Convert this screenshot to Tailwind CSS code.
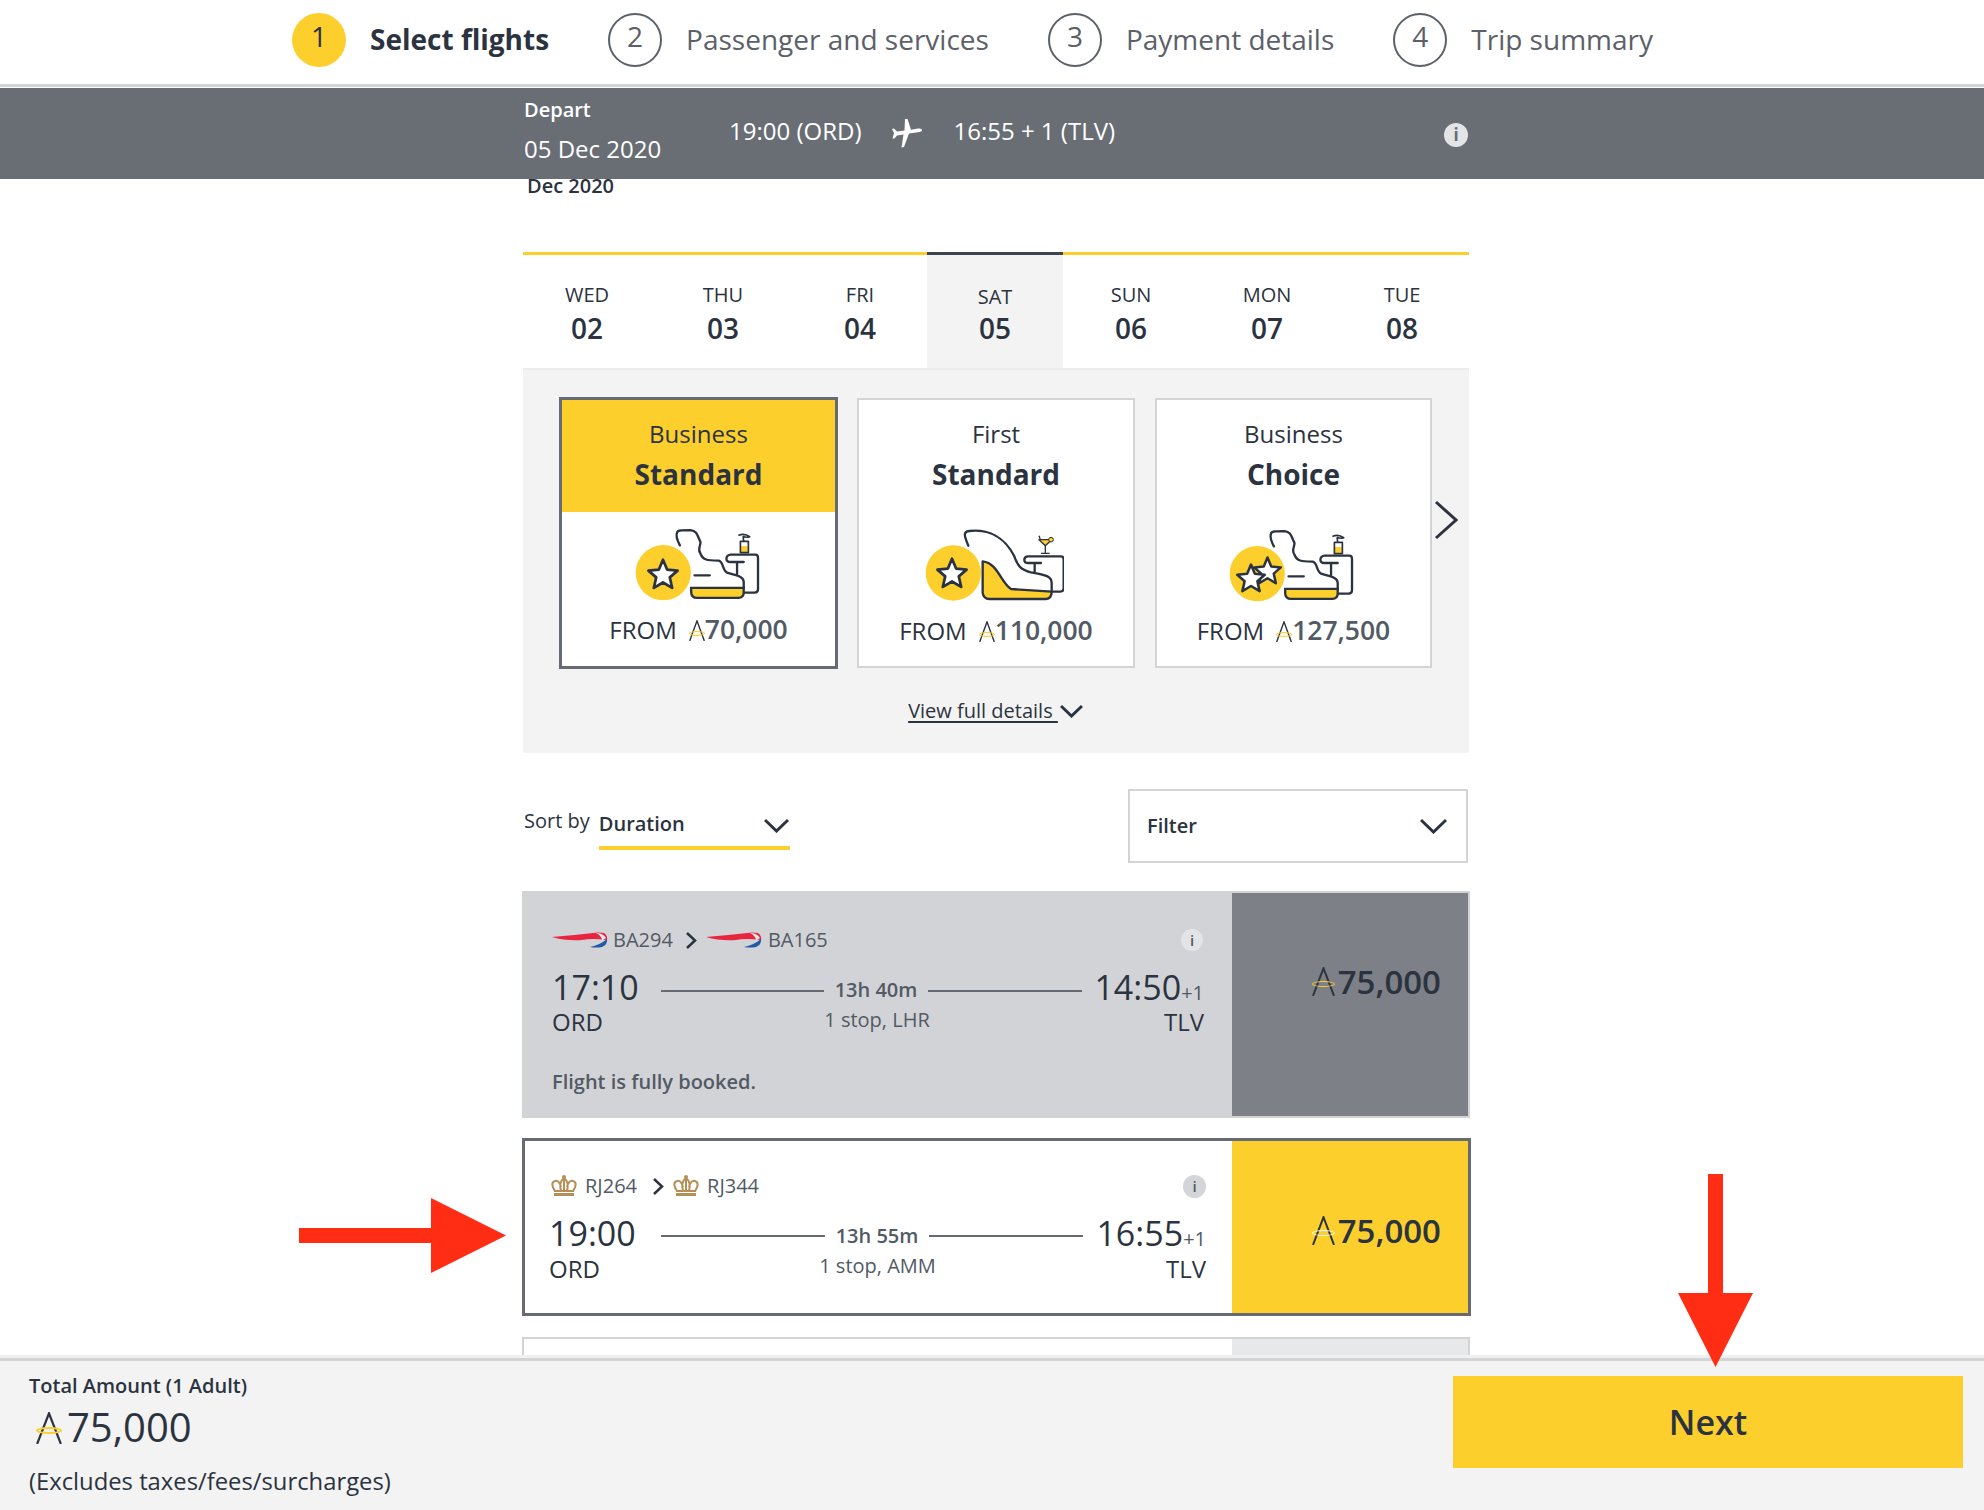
<!DOCTYPE html>
<html lang="en">
<head>
    <meta charset="UTF-8">
    <title>Select flights</title>
    <script src="https://cdn.jsdelivr.net/npm/@tailwindcss/browser@4"></script>
</head>
<body class="bg-white">
    <svg class="hidden">
        <symbol id="seat" viewBox="340 445 385 225">
            <circle cx="428" cy="582" r="83" fill="#fccf2d" />
            <path d="M512 628H670V642Q670 658 654 658H530Q512 658 512 640Z" fill="#fccf2d" stroke="#2b3340" stroke-width="7" />
            <path d="M478 500C470 485 465 470 470 460C472 454 480 454 510 454C530 456 530 470 540 490C540 505 530 510 540 525C548 545 560 545 595 546C610 550 605 575 620 582C640 590 670 590 670 610V628M522 590H568M650 528H705Q713 528 713 538V632Q713 642 703 642H672M650 528H630Q618 530 618 540Q618 550 630 550H670M650 550V590" fill="none" stroke="#2b3340" stroke-width="7" stroke-linejoin="round" stroke-linecap="round" />
            <path d="M662 502H682V520H662Z" fill="#fccf2d" />
            <path d="M660 488H684V522H660ZM670 488L668 472M654 470Q672 462 688 474Q676 478 668 472" fill="none" stroke="#2b3340" stroke-width="5" stroke-linejoin="round" />
        </symbol>
        <symbol id="star" viewBox="0 0 100 100">
            <path d="M50 8L62 37L93 40L70 60L77 91L50 75L23 91L30 60L7 40L38 37Z" fill="#fff" stroke="#2b3340" stroke-width="8" stroke-linejoin="round" />
        </symbol>
        <symbol id="avios" viewBox="0 0 24 24" preserveAspectRatio="none">
            <path d="M1 24L12 1L23 24" fill="none" stroke="currentColor" stroke-width="2" />
        </symbol>
        <symbol id="ba" viewBox="0 0 56 16">
            <path d="M0 5Q24 3 46 .5L52 1Q56 4 55 8Q40 6 30 8Q14 9 0 5Z" fill="#e8243f" />
            <path d="M38 15Q48 13 55 7Q56 12 50 15Q44 16 38 15Z" fill="#1f5aa6" />
            <path d="M44 1Q51 1 54 6L50 8.500Q50 4 44 1Z" fill="#e9e9ec" />
        </symbol>
        <symbol id="crown" viewBox="0 0 26 22">
            <path d="M4 16C1 12 0 7 4 6C7 5 9 8 10 12M22 16C25 12 26 7 22 6C19 5 17 8 16 12M13 3C9 6 9 12 10 16M13 3C17 6 17 12 16 16M13 3V16M3 16H23" fill="none" stroke="#b58f55" stroke-width="2" />
            <path d="M3 18H23V21H3Z" fill="#b58f55" />
            <circle cx="13" cy="2" r="2" fill="#b58f55" />
        </symbol>
    </svg>

    <div class="relative w-[1984px] h-[1510px] overflow-hidden font-['Open_Sans',sans-serif] text-[#2b3340]">
        <!-- Steps -->
        <div class="flex items-center h-[80px] mb-[4px] pl-[292px] text-[28px] text-[#5c6169]">
            <span class="flex items-center justify-center w-[54px] h-[54px] pb-[9px] rounded-full bg-[#fccf2d] text-[#2b3340]">1</span>
            <span class="ml-[24px] pb-[2px] font-bold text-[#2b3340]">Select flights</span>
            <span class="flex items-center justify-center w-[54px] h-[54px] ml-[59px] pb-[9px] rounded-full border-2 border-[#5c6169]">2</span>
            <span class="ml-[24px] pb-[2px]">Passenger and services</span>
            <span class="flex items-center justify-center w-[54px] h-[54px] ml-[59px] pb-[9px] rounded-full border-2 border-[#5c6169]">3</span>
            <span class="ml-[24px] pb-[2px]">Payment details</span>
            <span class="flex items-center justify-center w-[54px] h-[54px] ml-[59px] pb-[9px] rounded-full border-2 border-[#5c6169]">4</span>
            <span class="ml-[24px] pb-[2px]">Trip summary</span>
        </div>
        <div class="h-[3px] bg-[#d3d4d5]"></div>
        <div class="h-[1px] bg-white"></div>

        <!-- Selected flight bar -->
        <div class="relative z-10 flex h-[91px] pl-[524px] bg-[#696d74] text-white">
            <div class="w-[205px]">
                <div class="mt-[10px] h-[24px] leading-[24px] text-[20px] font-semibold">Depart</div>
                <div class="mt-[11px] h-[32px] leading-[32px] text-[24px]">05 Dec 2020</div>
            </div>
            <div class="mt-[26px] h-[34px] leading-[34px] text-[24px]">19:00 (ORD)</div>
            <svg class="ml-[30px] mt-[29px] w-[32px] h-[32px]" viewBox="0 0 32 32" fill="#fff">
                <path d="M31 13Q31 15 27 15.200L18 16.500L13 30L10.500 30.500L12.500 17.500L6 18.500L3.500 21.500L1.500 21.500L3 16L1 12L3 11.500L6 14.500L13.500 13.500L14 2L16.500 2L20 12.800L27 11.500Q31 11 31 13Z" />
            </svg>
            <div class="ml-[30px] mt-[26px] h-[34px] leading-[34px] text-[24px]">16:55 + 1 (TLV)</div>
            <div class="flex items-center justify-center w-[24px] h-[24px] ml-[329px] mt-[35px] rounded-full bg-[#e3e4e6] text-[#696d74] text-[17px] font-bold">i</div>
        </div>

        <main class="w-[946px] ml-[523px]">
            <div class="h-[73px] -mt-[6px] mb-[6px] pl-[4px] text-[20px] font-semibold leading-[26px]">Dec 2020</div>

            <!-- Days -->
            <div class="grid grid-cols-[128px_144px_132px_136px_136px_136px_134px] h-[118px] border-b-2 border-[#ececec]">
                <div class="border-t-[3px] border-[#fccf2d] text-center pt-[26px]"><div class="text-[20px] leading-[28px]">WED</div><div class="text-[28px] font-semibold leading-[38px]">02</div></div>
                <div class="border-t-[3px] border-[#fccf2d] text-center pt-[26px]"><div class="text-[20px] leading-[28px]">THU</div><div class="text-[28px] font-semibold leading-[38px]">03</div></div>
                <div class="border-t-[3px] border-[#fccf2d] text-center pt-[26px] pr-[2px]"><div class="text-[20px] leading-[28px]">FRI</div><div class="text-[28px] font-semibold leading-[38px]">04</div></div>
                <div class="border-t-[3px] border-[#3f4550] bg-[#f3f3f3] text-center pt-[28px]"><div class="text-[20px] leading-[28px]">SAT</div><div class="text-[28px] font-semibold leading-[35px]">05</div></div>
                <div class="border-t-[3px] border-[#fccf2d] text-center pt-[26px]"><div class="text-[20px] leading-[28px]">SUN</div><div class="text-[28px] font-semibold leading-[38px]">06</div></div>
                <div class="border-t-[3px] border-[#fccf2d] text-center pt-[26px]"><div class="text-[20px] leading-[28px]">MON</div><div class="text-[28px] font-semibold leading-[38px]">07</div></div>
                <div class="border-t-[3px] border-[#fccf2d] text-center pt-[26px]"><div class="text-[20px] leading-[28px]">TUE</div><div class="text-[28px] font-semibold leading-[38px]">08</div></div>
            </div>

            <!-- Fare cards -->
            <div class="h-[383px] pt-[27px] pl-[36px] bg-[#f3f3f3]">
                <div class="flex items-center gap-[19px]">
                    <div class="w-[279px] h-[272px] border-[3px] border-[#666b73] bg-white text-center">
                        <div class="h-[112px] pt-[17px] bg-[#fccf2d]">
                            <div class="text-[24px] leading-[33px]">Business</div>
                            <div class="text-[28px] font-bold leading-[38px] mt-[5px]">Standard</div>
                        </div>
                        <svg class="w-[128px] h-[75px] mt-[15px] ml-[72px]"><use href="#seat" /></svg>
                        <svg class="absolute left-[646px] top-[557px] w-[34px] h-[34px]"><use href="#star" /></svg>
                        <div class="flex items-center justify-center h-[36px] mt-[10px]">
                            <span class="text-[24px]">FROM</span>
                            <span class="relative ml-[12px] w-[16px] h-[21px]"><svg class="w-[16px] h-[21px]"><use href="#avios" /></svg><i class="absolute left-0 top-[11px] w-[16px] h-[5px] rounded-[50%] border border-[#fccf2d]"></i></span>
                            <span class="text-[26.500px] font-semibold text-[#525a65]">70,000</span>
                        </div>
                    </div>
                    <div class="w-[278px] h-[270px] border-2 border-[#d4d4d4] bg-white text-center">
                        <div class="h-[112px] pt-[17px]">
                            <div class="text-[24px] leading-[33px]">First</div>
                            <div class="text-[28px] font-bold leading-[38px] mt-[5px]">Standard</div>
                        </div>
                        <svg class="w-[140px] h-[75px] mt-[16px] ml-[65px]" viewBox="1209 445 420 225">
                            <path d="M1385 612V640Q1388 658 1405 658H1575Q1592 656 1592 636L1470 628C1440 610 1430 550 1385 545Z" fill="#fccf2d" stroke="#2b3340" stroke-width="7" stroke-linejoin="round" />
                            <circle cx="1297" cy="580" r="83" fill="#fccf2d" />
                            <path d="M1342 498C1330 470 1325 456 1345 454C1400 448 1450 470 1480 530C1490 560 1500 570 1530 578C1575 586 1592 590 1592 610V636M1590 530H1620Q1628 530 1628 540V626Q1628 636 1618 636H1592M1590 530H1520Q1510 532 1510 540Q1510 550 1522 550H1560M1541 550V576" fill="none" stroke="#2b3340" stroke-width="7" stroke-linejoin="round" stroke-linecap="round" />
                            <path d="M1554 480H1592L1573 498Z" fill="#fccf2d" stroke="#2b3340" stroke-width="4" stroke-linejoin="round" />
                            <path d="M1573 498V520M1560 521H1586M1554 468L1558 480" stroke="#2b3340" stroke-width="4" fill="none" />
                            <circle cx="1590" cy="480" r="7" fill="#fccf2d" stroke="#2b3340" stroke-width="3" />
                        </svg>
                        <svg class="absolute left-[935px] top-[556px] w-[34px] h-[34px]"><use href="#star" /></svg>
                        <div class="flex items-center justify-center h-[36px] mt-[10px]">
                            <span class="text-[24px]">FROM</span>
                            <span class="relative ml-[12px] w-[16px] h-[21px]"><svg class="w-[16px] h-[21px]"><use href="#avios" /></svg><i class="absolute left-0 top-[11px] w-[16px] h-[5px] rounded-[50%] border border-[#fccf2d]"></i></span>
                            <span class="text-[26.500px] font-semibold text-[#525a65]">110,000</span>
                        </div>
                    </div>
                    <div class="w-[277px] h-[270px] ml-px border-2 border-[#d4d4d4] bg-white text-center">
                        <div class="h-[112px] pt-[17px]">
                            <div class="text-[24px] leading-[33px]">Business</div>
                            <div class="text-[28px] font-bold leading-[38px] mt-[5px]">Choice</div>
                        </div>
                        <svg class="w-[128px] h-[75px] mt-[16px] ml-[71px]"><use href="#seat" /></svg>
                        <svg class="absolute left-[1252px] top-[555px] w-[31px] h-[31px]"><use href="#star" /></svg>
                        <svg class="absolute left-[1235px] top-[562px] w-[32px] h-[32px]"><use href="#star" /></svg>
                        <div class="flex items-center justify-center h-[36px] mt-[10px]">
                            <span class="text-[24px]">FROM</span>
                            <span class="relative ml-[12px] w-[16px] h-[21px]"><svg class="w-[16px] h-[21px]"><use href="#avios" /></svg><i class="absolute left-0 top-[11px] w-[16px] h-[5px] rounded-[50%] border border-[#fccf2d]"></i></span>
                            <span class="text-[26.500px] font-semibold text-[#525a65]">127,500</span>
                        </div>
                    </div>
                    <svg class="-ml-[17px] mb-[26px] w-[24px] h-[40px]" viewBox="0 0 24 40" fill="none" stroke="#2b3340" stroke-width="3"><path d="M2 2L22 20L2 38" /></svg>
                </div>
                <div class="flex items-center justify-center mt-[25px] h-[34px] pr-[37px] text-[20px]">
                    <span class="underline underline-offset-[3px]">View full details&nbsp;</span>
                    <svg class="ml-[2px] w-[23px] h-[14px]" viewBox="0 0 23 14" fill="none" stroke="#2b3340" stroke-width="3"><path d="M1 2L11.500 12L22 2" /></svg>
                </div>
            </div>

            <!-- Sort and filter -->
            <div class="flex items-center justify-between h-[74px] mt-[36px]">
                <div class="flex h-[74px] pl-[1px]">
                    <span class="mt-[18px] text-[20px] leading-[28px]">Sort by</span>
                    <div class="flex justify-between items-start w-[191px] h-[61px] ml-[9px] border-b-4 border-[#fccf2d]">
                        <span class="mt-[21px] text-[20px] font-semibold leading-[28px]">Duration</span>
                        <svg class="mt-[29px] mr-[1px] w-[25px] h-[15px]" viewBox="0 0 25 15" fill="none" stroke="#2b3340" stroke-width="3"><path d="M1 2L12.500 13L24 2" /></svg>
                    </div>
                </div>
                <div class="flex items-center justify-between w-[340px] h-[74px] mr-px pl-[17px] pr-[19px] border-2 border-[#d4d4d4]">
                    <span class="text-[20px] font-semibold">Filter</span>
                    <svg class="w-[27px] h-[16px]" viewBox="0 0 27 16" fill="none" stroke="#2b3340" stroke-width="3"><path d="M1 2L13.500 14L26 2" /></svg>
                </div>
            </div>

            <!-- Flights -->
            <div class="grid grid-cols-[710px_1fr] w-[948px] h-[227px] -ml-[1px] mt-[28px] bg-[#d2d3d6]">
                <div class="pl-[30px] pr-[28px] pt-[37px]">
                    <div class="flex items-center h-[24px] text-[20px] text-[#525a65]">
                        <svg class="w-[56px] h-[16px]"><use href="#ba" /></svg>
                        <span class="ml-[5px]">BA294</span>
                        <svg class="ml-[12px] w-[12px] h-[17px]" viewBox="0 0 12 17" fill="none" stroke="#2b3340" stroke-width="2.500"><path d="M2 1L10 8.500L2 16" /></svg>
                        <svg class="ml-[9px] w-[56px] h-[16px]"><use href="#ba" /></svg>
                        <span class="ml-[6px]">BA165</span>
                        <span class="flex items-center justify-center w-[22px] h-[22px] ml-auto mr-px rounded-full bg-[#e3e4e6] text-[#525a65] text-[15px] font-semibold">i</span>
                    </div>
                    <div class="flex h-[72px] mt-[13px]">
                        <div class="w-[109px]">
                            <div class="text-[34px] leading-[44px]">17:10</div>
                            <div class="text-[24px] leading-[25px]">ORD</div>
                        </div>
                        <div class="w-[421px]">
                            <div class="flex items-center h-[50px]">
                                <span class="w-[163px] h-[2px] mt-[1px] bg-[#666b73]"></span>
                                <span class="w-[104px] text-center text-[20px] font-semibold text-[#525a65]">13h 40m</span>
                                <span class="flex-1 h-[2px] mt-[1px] bg-[#666b73]"></span>
                            </div>
                            <div class="-mt-[9px] pl-[11px] text-center text-[20px] leading-[28px] text-[#525a65]">1 stop, LHR</div>
                        </div>
                        <div class="w-[122px] text-right">
                            <div class="h-[44px] text-[34px] leading-[44px] whitespace-nowrap">14:50<span class="text-[20px] leading-none text-[#525a65]">+1</span></div>
                            <div class="text-[24px] leading-[25px]">TLV</div>
                        </div>
                    </div>
                    <div class="mt-[31px] text-[20px] font-semibold leading-[28px] text-[#525a65]">Flight is fully booked.</div>
                </div>
                <div class="flex justify-end items-start m-[2px] ml-0 pr-[27px] pt-[66px] bg-[#7d8087] text-[33px] font-semibold leading-[46px]">
                    <span class="relative mt-[8px] mr-[3px] w-[23px] h-[29px]"><svg class="w-[23px] h-[29px]"><use href="#avios" /></svg><i class="absolute left-0 top-[14px] w-[23px] h-[6px] rounded-[50%] border border-[#fccf2d]"></i></span>
                    75,000
                </div>
            </div>

            <div class="grid grid-cols-[707px_1fr] w-[949px] h-[178px] -ml-[1px] mt-[20px] border-[3px] border-[#666b73]">
                <div class="pl-[26px] pr-[26px] pt-[33px]">
                    <div class="flex items-center h-[24px] text-[20px] text-[#525a65]">
                        <svg class="w-[26px] h-[22px]"><use href="#crown" /></svg>
                        <span class="ml-[8px]">RJ264</span>
                        <svg class="ml-[15px] w-[12px] h-[17px]" viewBox="0 0 12 17" fill="none" stroke="#2b3340" stroke-width="2.500"><path d="M2 1L10 8.500L2 16" /></svg>
                        <svg class="ml-[9px] w-[26px] h-[22px]"><use href="#crown" /></svg>
                        <span class="ml-[8px]">RJ344</span>
                        <span class="flex items-center justify-center w-[23px] h-[23px] ml-auto rounded-full bg-[#d4d5d8] text-[#525a65] text-[15px] font-semibold">i</span>
                    </div>
                    <div class="flex h-[72px] -ml-[2px] mt-[13px]">
                        <div class="w-[112px]">
                            <div class="text-[34px] leading-[44px]">19:00</div>
                            <div class="text-[24px] leading-[28px]">ORD</div>
                        </div>
                        <div class="w-[422px]">
                            <div class="flex items-center h-[49px]">
                                <span class="w-[164px] h-[2px] bg-[#666b73]"></span>
                                <span class="w-[104px] text-center text-[20px] font-semibold text-[#525a65]">13h 55m</span>
                                <span class="flex-1 h-[2px] bg-[#666b73]"></span>
                            </div>
                            <div class="-mt-[8px] pl-[11px] text-center text-[20px] leading-[28px] text-[#525a65]">1 stop, AMM</div>
                        </div>
                        <div class="w-[123px] text-right">
                            <div class="h-[44px] text-[34px] leading-[44px] whitespace-nowrap">16:55<span class="text-[20px] leading-none text-[#525a65]">+1</span></div>
                            <div class="text-[24px] leading-[28px]">TLV</div>
                        </div>
                    </div>
                </div>
                <div class="flex justify-end items-start pr-[27px] pt-[67px] bg-[#fccf2d] text-[33px] font-semibold leading-[46px]">
                    <span class="relative mt-[8px] mr-[3px] w-[23px] h-[29px]"><svg class="w-[23px] h-[29px]"><use href="#avios" /></svg><i class="absolute left-0 top-[14px] w-[23px] h-[6px] rounded-[50%] border border-white"></i></span>
                    75,000
                </div>
            </div>

            <div class="grid grid-cols-[708px_1fr] w-[948px] h-[60px] -ml-[1px] mt-[21px] border-2 border-[#d4d4d4]">
                <div></div>
                <div class="bg-[#e7e8ea]"></div>
            </div>
        </main>

        <!-- Total bar -->
        <div class="absolute left-0 right-0 bottom-0 z-20 h-[155px] border-t-[3px] border-[#f0f0f0]">
            <div class="flex justify-between h-full pl-[29px] pr-[21px] bg-[#f3f3f3] border-t-[3px] border-[#d3d4d5]">
                <div>
                    <div class="mt-[11px] text-[20px] font-semibold leading-[28px]">Total Amount (1 Adult)</div>
                    <div class="flex items-center h-[52px] mt-[1px] pl-[7px]">
                        <span class="relative w-[26px] h-[32px] mr-[5px] mt-[2px]"><svg class="w-[26px] h-[32px]"><use href="#avios" /></svg><i class="absolute left-0 top-[15px] w-[26px] h-[7px] rounded-[50%] border-2 border-[#fccf2d]"></i></span>
                        <span class="text-[40px]">75,000</span>
                    </div>
                    <div class="mt-[12px] text-[23.800px] leading-[32px]">(Excludes taxes/fees/surcharges)</div>
                </div>
                <div class="flex items-center justify-center w-[510px] h-[92px] mt-[15px] bg-[#fccf2d] text-[34px] font-semibold">Next</div>
            </div>
        </div>

        <!-- Annotation arrows -->
        <svg class="absolute left-[299px] top-[1198px] z-30 w-[207px] h-[75px]" viewBox="0 0 207 75" fill="#ff2d13"><path d="M0 30H132V0L207 37.500L132 75V45H0Z" /></svg>
        <svg class="absolute left-[1678px] top-[1174px] z-30 w-[75px] h-[193px]" viewBox="0 0 75 193" fill="#ff2d13"><path d="M30 0H45V119H75L37.500 193L0 119H30Z" /></svg>
    </div>
</body>
</html>
